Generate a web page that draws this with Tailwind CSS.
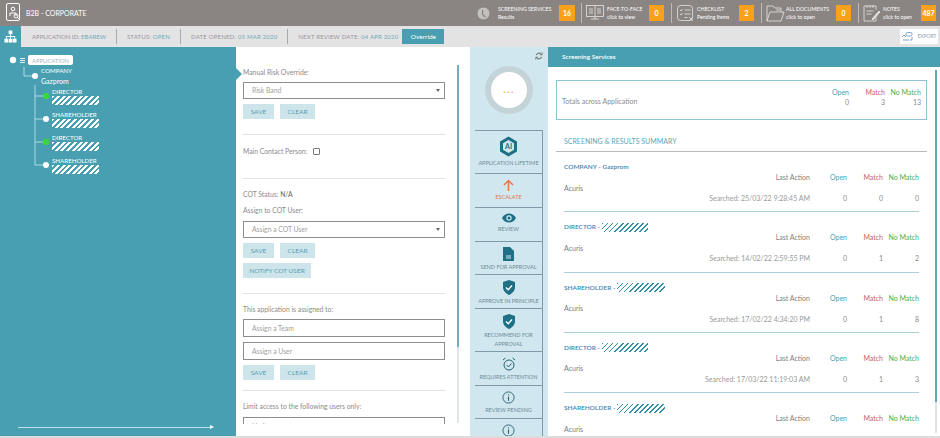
<!DOCTYPE html>
<html lang="en">
<head>
  <meta charset="UTF-8">
  <title>B2B - Corporate</title>
  <script src="https://cdn.jsdelivr.net/npm/@tailwindcss/browser@4"></script>
</head>
<body class="bg-white w-[940px] h-[438px] overflow-hidden font-['Lato',sans-serif] text-[6.8px] text-[#8b8b8b]">

  <!-- Top bar -->
  <header class="h-[26px] bg-[#8a8583] flex items-center text-white">
    <svg class="ml-[6px] w-[16px] h-[20px]" viewBox="0 0 16 20" fill="none" stroke="#fff" stroke-width="1"><rect x="0.5" y="0.5" width="13" height="17" rx="1.5"/><circle cx="7" cy="6" r="1.8"/><path d="M4 13v-3h6v3M11 14l3 3"/><circle cx="10" cy="13" r="2"/></svg>
    <span class="ml-[4px] text-[7px]">B2B - CORPORATE</span>

    <div class="ml-auto flex items-center h-full">
      <svg class="w-[13px] h-[13px] mr-[8px]" viewBox="0 0 14 14"><circle cx="7" cy="7" r="6.5" fill="#c3c0be"/><path d="M6 3v5l3 3" stroke="#8a8583" fill="none" stroke-width="1.3"/></svg>
      <div class="w-[61px] leading-[8px] text-[5.2px]"><div>SCREENING SERVICES</div><div>Results</div></div>
      <div class="w-[16px] h-[16px] bg-[#f9a11b] flex items-center justify-center text-[7px] font-bold">16</div>
      <div class="w-px h-[20px] bg-[#bdbab8] ml-[6px] mr-[4px]"></div>

      <svg class="w-[18px] h-[16px] mr-[3px]" viewBox="0 0 18 16" fill="none" stroke="#e6e4e3" stroke-width="0.8"><rect x="0.5" y="0.5" width="17" height="11"/><path d="M9 1v10M3 4h4M3 6h4M3 8h4M11 4h4M11 6h4M11 8h4M5 14h8M9 12v2"/></svg>
      <div class="w-[42px] leading-[8px] text-[5.2px]"><div>FACE-TO-FACE</div><div>click to view</div></div>
      <div class="w-[15px] h-[16px] bg-[#f9a11b] flex items-center justify-center text-[7px] font-bold">0</div>
      <div class="w-px h-[20px] bg-[#bdbab8] ml-[7px] mr-[5px]"></div>

      <svg class="w-[18px] h-[17px] mr-[2px]" viewBox="0 0 18 17" fill="none" stroke="#e6e4e3" stroke-width="0.8"><rect x="0.5" y="0.5" width="15" height="15" rx="3"/><path d="M3 5l1 1 1.5-2M3 9l1 1 1.5-2M7.5 5h6M7.5 9h6M7.5 12.5h3M12 12l4 4M16 12l-4 4"/></svg>
      <div class="w-[42px] leading-[8px] text-[5.2px]"><div>CHECKLIST</div><div>Pending Items</div></div>
      <div class="w-[15px] h-[16px] bg-[#f9a11b] flex items-center justify-center text-[7px] font-bold">2</div>
      <div class="w-px h-[20px] bg-[#bdbab8] ml-[7px] mr-[4px]"></div>

      <svg class="w-[19px] h-[17px] mr-[1px]" viewBox="0 0 19 17" fill="none" stroke="#e6e4e3" stroke-width="0.8"><path d="M1 16V1h6l2 2h6v4M1 16l3-9h14l-3 9z"/><path d="M10 5h4"/></svg>
      <div class="w-[50px] leading-[8px] text-[5.2px]"><div>ALL DOCUMENTS</div><div>click to open</div></div>
      <div class="w-[15px] h-[16px] bg-[#f9a11b] flex items-center justify-center text-[7px] font-bold">0</div>
      <div class="w-px h-[20px] bg-[#bdbab8] ml-[7px] mr-[4px]"></div>

      <svg class="w-[18px] h-[17px] mr-[2px]" viewBox="0 0 18 17" fill="none" stroke="#e6e4e3" stroke-width="0.8"><path d="M13 11v5H1V1h12v4M4 0v3M7 0v3M10 0v3M3.5 6h7M3.5 9h5"/><path d="M9 14l7-8 1 1-7 8z" fill="#e6e4e3"/></svg>
      <div class="w-[38px] leading-[8px] text-[5.2px]"><div>NOTES</div><div>click to open</div></div>
      <div class="w-[15px] h-[16px] bg-[#f9a11b] flex items-center justify-center text-[7px] font-bold">487</div>
      <div class="w-[4px]"></div>
    </div>
  </header>

  <!-- Application info bar -->
  <div class="h-[21px] bg-[#e4e3e4] flex items-center text-[6px] text-[#9a93a0]">
    <div class="w-[21px] h-full bg-[#479fb1] flex items-center justify-center">
      <svg class="w-[13px] h-[13px]" viewBox="0 0 14 14" fill="#fff"><rect x="5" y="0.5" width="4" height="4"/><rect x="0.5" y="9.5" width="4" height="4"/><rect x="5" y="9.5" width="4" height="4"/><rect x="9.5" y="9.5" width="4" height="4"/><path d="M6.5 4h1v2.5H12V10h-1V7.5H7.500V10h-1V7.500H3V10H2V6.500h4.500z"/></svg>
    </div>
    <span class="ml-[11px]">APPLICATION ID: <span class="text-[#6fa9b8]">EBAREW</span></span>
    <div class="w-px h-[15px] bg-[#a9a9a9] mx-[10px]"></div>
    <span class="tracking-[0.2px]">STATUS: <span class="text-[#5fb0c0]">OPEN</span></span>
    <div class="w-px h-[15px] bg-[#a9a9a9] mx-[10px]"></div>
    <span class="tracking-[0.2px]">DATE OPENED: <span class="text-[#6fa9b8]">05 MAR 2020</span></span>
    <div class="w-px h-[15px] bg-[#a9a9a9] mx-[10px]"></div>
    <span class="tracking-[0.2px]">NEXT REVIEW DATE: <span class="text-[#6fa9b8]">04 APR 2020</span></span>
    <div class="ml-[4px] w-[42px] h-[15px] bg-[#479fb1] text-white text-[6.5px] flex items-center justify-center">Override</div>
    <div class="ml-auto mr-[2px] w-[38px] h-[15px] bg-white flex items-center justify-center gap-[3px] text-[5px] text-[#8fa3b5]">
      <svg class="w-[13px] h-[9px]" viewBox="0 0 13 9" fill="none" stroke="#6e9bc4" stroke-width="0.9"><rect x="5" y="0.5" width="6" height="3.500" rx="1.500"/><path d="M2 8h6M1 5l2-2 2 2M11 5v3h-2"/></svg>
      EXPORT
    </div>
  </div>

  <main class="flex h-[389px]">
    <!-- Tree panel -->
    <section class="relative w-[236px] bg-[#479fb1] text-white text-[7px] leading-[11px] pt-[8px]">
      <svg class="absolute left-0 top-0 w-[100px] h-[130px]" viewBox="0 0 100 130" fill="none" stroke="#cfe6ee" stroke-width="0.8">
        <path d="M24 20v9h9M35 38v80M35 49h9M35 72h9M35 95h9M35 118h9"/>
        <g stroke="none">
          <circle cx="13" cy="13" r="3.200" fill="#fff"/>
          <path d="M20 11h5v1h-5zM20 13h5v1h-5zM20 15h5v1h-5z" fill="#e4f0f3"/>
          <circle cx="35" cy="29" r="3" fill="#fff"/>
          <circle cx="46" cy="49" r="3.200" fill="#3fd43f"/>
          <circle cx="46" cy="72" r="3" fill="#fff"/>
          <circle cx="46" cy="95" r="3.200" fill="#3fd43f"/>
          <circle cx="46" cy="118" r="3" fill="#fff"/>
        </g>
      </svg>
      <div class="ml-[28px] w-[45px] h-[10px] bg-white rounded-[2px] text-[#a7b9bf] flex items-center justify-center text-[5.8px]">APPLICATION</div>
      <div class="ml-[41px] leading-[11px]"><span class="text-[6.2px]">COMPANY</span><br>Gazprom</div>
      <div id="treeNodes" class="ml-[52px]"></div>
      <div class="absolute left-[18px] bottom-[8px] w-[194px] h-px bg-[#bfe0e8]">
        <div class="absolute right-[-2px] top-[-2px] w-0 h-0 border-y-[2.500px] border-y-transparent border-l-[4px] border-l-white"></div>
      </div>
      <div class="absolute left-[236px] top-[21px] z-10 w-0 h-0 border-y-[6px] border-y-transparent border-l-[6px] border-l-[#479fb1]"></div>
    </section>

    <!-- Form panel -->
    <section class="relative w-[234px] overflow-hidden px-[7px] pt-[20px] text-[#8b8b8b]">
      <div class="w-[202px]">
        <p class="leading-[10px]">Manual Risk Override:</p>
        <div class="mt-[5px] h-[17px] border border-[#8d8d8d] flex items-center justify-between pl-[8px] pr-[4px] text-[#a0a0a0]"><span>Risk Band</span><span class="w-0 h-0 border-x-[2px] border-x-transparent border-t-[3px] border-t-[#666]"></span></div>
        <div class="mt-[5px] flex gap-[6px]">
          <button class="w-[31px] h-[15px] bg-[#cde4eb] text-[#5b9db0] text-[6.500px]">SAVE</button>
          <button class="w-[35px] h-[15px] bg-[#cde4eb] text-[#5b9db0] text-[6.500px]">CLEAR</button>
        </div>
        <div class="mt-[15px] h-px bg-[#e2e2e2]"></div>

        <div class="mt-[10px] h-[12px] flex items-center gap-[6px]">
          <span>Main Contact Person:</span>
          <span class="w-[7px] h-[7px] border border-[#777] rounded-[1px]"></span>
        </div>
        <div class="mt-[21px] h-px bg-[#e2e2e2]"></div>

        <p class="mt-[10px] leading-[10px]">COT Status: <span class="text-[#666]">N/A</span></p>
        <p class="mt-[6px] leading-[10px]">Assign to COT User:</p>
        <div class="mt-[6px] h-[17px] border border-[#8d8d8d] flex items-center justify-between pl-[8px] pr-[4px] text-[#a0a0a0]"><span>Assign a COT User</span><span class="w-0 h-0 border-x-[2px] border-x-transparent border-t-[3px] border-t-[#666]"></span></div>
        <div class="mt-[5px] flex gap-[6px]">
          <button class="w-[31px] h-[15px] bg-[#cde4eb] text-[#5b9db0] text-[6.500px]">SAVE</button>
          <button class="w-[35px] h-[15px] bg-[#cde4eb] text-[#5b9db0] text-[6.500px]">CLEAR</button>
        </div>
        <button class="mt-[5px] block w-[68px] h-[15px] bg-[#cde4eb] text-[#5b9db0] text-[6.500px]">NOTIFY COT USER</button>
        <div class="mt-[15px] h-px bg-[#e2e2e2]"></div>

        <p class="mt-[10px] leading-[10px]">This application is assigned to:</p>
        <div class="mt-[5px] h-[18px] border border-[#8d8d8d] flex items-center pl-[8px] text-[#a0a0a0]">Assign a Team</div>
        <div class="mt-[5px] h-[18px] border border-[#8d8d8d] flex items-center pl-[8px] text-[#a0a0a0]">Assign a User</div>
        <div class="mt-[5px] flex gap-[6px]">
          <button class="w-[31px] h-[15px] bg-[#cde4eb] text-[#5b9db0] text-[6.500px]">SAVE</button>
          <button class="w-[35px] h-[15px] bg-[#cde4eb] text-[#5b9db0] text-[6.500px]">CLEAR</button>
        </div>
        <div class="mt-[10px] h-px bg-[#e2e2e2]"></div>

        <p class="mt-[10px] leading-[10px]">Limit access to the following users only:</p>
        <div class="mt-[6px] h-[18px] border border-[#8d8d8d] flex items-center pl-[8px] text-[#a0a0a0]">Limit access to users</div>
      </div>
      <div class="absolute left-[221px] top-[18px] w-[2px] h-[358px] bg-[#dfe6e8]">
        <div class="w-[2px] h-[282px] bg-[#6fb0c0]"></div>
      </div>
      <div class="absolute left-0 right-0 bottom-0 h-[12px] bg-white"></div>
    </section>

    <!-- Action column -->
    <section class="relative w-[78px] bg-[#d0e7ef] px-[5px] overflow-hidden">
      <svg class="absolute left-[65px] top-[5px] w-[8px] h-[8px]" viewBox="0 0 10 10" fill="none" stroke="#555" stroke-width="1.200"><path d="M8.500 3A4 4 0 0 0 1.500 4M1.500 7A4 4 0 0 0 8.500 6"/><path d="M9 0.500v3H6M1 9.500v-3h3" stroke-width="0.8"/></svg>
      <div class="mt-[19px] mx-auto w-[48px] h-[48px] rounded-full bg-[#c4d3d7] flex items-center justify-center">
        <div class="w-[36px] h-[36px] rounded-full bg-white flex items-center justify-center text-[#f2a94a] text-[10px] font-bold tracking-[1.500px] leading-none pb-[3px]">...</div>
      </div>
      <div id="actions" class="mt-[16px] border-t border-[#7f9aa8]"></div>
    </section>

    <!-- Screening services panel -->
    <section class="relative flex-1 overflow-hidden">
      <div class="h-[20px] bg-[#479fb1] text-white text-[6.500px] flex items-center pl-[14px] font-semibold">Screening Services</div>
      <div class="mx-[8px] mt-[13px] w-[371px] h-[40px] border border-[#8fc3d0] flex items-center pl-[5px] pt-[3px] text-[7px] relative">
        <span>Totals across Application</span>
        <div class="absolute right-[5px] top-[6px] grid grid-cols-[44px_36px_36px] text-right leading-[10px] whitespace-nowrap">
          <span class="text-[#479fb1]">Open</span><span class="text-[#c8605f]">Match</span><span class="text-[#4caf50]">No Match</span>
          <span>0</span><span>3</span><span>13</span>
        </div>
      </div>
      <div class="mx-[8px] w-[371px] mt-[15px] pl-[8px] pb-[4px] border-b border-[#b9b9b9] text-[#5fa5b6] text-[7px] leading-[12px]">SCREENING &amp; RESULTS SUMMARY</div>
      <div id="rows" class="ml-[16px] w-[355px]"></div>
      <div class="absolute left-[387px] top-[23px] w-[2px] h-[363px] bg-[#dfe3e5]">
        <div class="w-[2px] h-[332px] bg-[#5fa8b8]"></div>
      </div>
    </section>
  </main>
  <div class="h-[2px] bg-[#dcdcdc]"></div>

  <script>
    // Tree children
    const treeNodes = ["DIRECTOR", "SHAREHOLDER", "DIRECTOR", "SHAREHOLDER"];
    document.getElementById("treeNodes").innerHTML = treeNodes.map(name => `
      <div class="h-[23px]">
        <div class="leading-[9px] text-[6.200px]">${name}</div>
        <div class="w-[47px] h-[9px] bg-[repeating-linear-gradient(135deg,#fff_0_2px,transparent_2px_4px)]"></div>
      </div>`).join("");

    // Action buttons
    const shield = `<svg class="w-[14px] h-[15px]" viewBox="0 0 14 15"><path d="M7 0l6 2v5c0 4-3 6.500-6 8-3-1.500-6-4-6-8V2z" fill="#1f6f85"/><path d="M4 7.500l2.200 2.200L10 5.500" stroke="#fff" stroke-width="1.400" fill="none"/></svg>`;
    const info = `<svg class="w-[13px] h-[13px]" viewBox="0 0 14 14" fill="none" stroke="#2a6070"><circle cx="7" cy="7" r="6"/><path d="M7 6v4.500M7 3.500v1.200" stroke-width="1.200"/></svg>`;
    const actions = [
      { h: 43, label: "APPLICATION LIFETIME", icon: `<svg class="w-[19px] h-[21px]" viewBox="0 0 19 21"><path d="M9.500 0.500l8.500 5v10l-8.500 5-8.500-5v-10z" fill="#1f6f85"/><path d="M9.500 4l5.500 3.200v6.600L9.500 17 4 13.800V7.200z" fill="#d0e7ef"/><text x="9.500" y="13" text-anchor="middle" font-size="7" font-weight="700" fill="#1f6f85" font-family="Lato">AI</text></svg>` },
      { h: 34, label: "ESCALATE", color: "text-[#e8744a]", icon: `<svg class="w-[11px] h-[12px]" viewBox="0 0 11 12" fill="none" stroke="#e8744a" stroke-width="1.500"><path d="M5.500 12V1.500M1 6l4.500-4.500L10 6"/></svg>` },
      { h: 34, label: "REVIEW", icon: `<svg class="w-[14px] h-[10px]" viewBox="0 0 14 10"><path d="M0 5c3-6 11-6 14 0-3 6-11 6-14 0z" fill="#1f6f85"/><circle cx="7" cy="5" r="2.700" fill="#d0e7ef"/><circle cx="7" cy="5" r="1.500" fill="#1f6f85"/></svg>` },
      { h: 33, label: "SEND FOR APPROVAL", icon: `<svg class="w-[11px] h-[14px]" viewBox="0 0 11 14"><path d="M0 0h7l4 4v10H0z" fill="#1f6f85"/><path d="M3 9h5M3 11h5" stroke="#d0e7ef"/></svg>` },
      { h: 34, label: "APPROVE IN PRINCIPLE", icon: shield },
      { h: 43, label: "RECOMMEND FOR<br>APPROVAL", icon: shield },
      { h: 34, label: "REQUIRES ATTENTION", icon: `<svg class="w-[14px] h-[14px]" viewBox="0 0 14 14" fill="none" stroke="#2a6070"><circle cx="7" cy="8" r="5"/><path d="M4.500 8l2 2 3-3.500M1 3l2.500-2M13 3l-2.500-2"/></svg>` },
      { h: 33, label: "REVIEW PENDING", icon: info },
      { h: 34, label: "", icon: info },
    ];
    document.getElementById("actions").innerHTML = actions.map(a => `
      <div class="flex flex-col items-center pt-[5px] border-b border-r border-[#7f9aa8] text-[5.500px] leading-[9px] text-center ${a.color || "text-[#6f8b96]"}" style="height:${a.h}px">
        ${a.icon}
        <span class="mt-[2px]">${a.label}</span>
      </div>`).join("");

    // Screening rows
    const rows = [
      { type: "COMPANY", name: "Gazprom", searched: "25/03/22 9:28:45 AM", vals: [0, 0, 0] },
      { type: "DIRECTOR", w: 46, searched: "14/02/22 2:59:55 PM", vals: [0, 1, 2] },
      { type: "SHAREHOLDER", w: 48, searched: "17/02/22 4:34:20 PM", vals: [0, 1, 8] },
      { type: "DIRECTOR", w: 46, searched: "17/03/22 11:19:03 AM", vals: [0, 1, 3] },
      { type: "SHAREHOLDER", w: 48, searched: "", vals: [0, 0, 0] },
    ];
    document.getElementById("rows").innerHTML = rows.map(r => `
      <div class="h-[60.300px] pt-[10px] border-b border-[#a9cfd9]">
        <div class="flex items-center gap-[2px] h-[10px] text-[#3f7fb0] font-semibold text-[6.500px]">
          <span>${r.type} -</span>
          ${r.name ? `<span>${r.name}</span>` : `<span class="h-[9px] bg-[repeating-linear-gradient(135deg,#2f8ea3_0_1.200px,transparent_1.200px_3.600px)]" style="width:${r.w}px"></span>`}
        </div>
        <div class="grid grid-cols-[246px_37px_36px_36px] text-[7px] leading-[10.500px] text-right whitespace-nowrap">
          <span class="text-[#808080]">Last Action</span>
          <span class="text-[#479fb1]">Open</span>
          <span class="text-[#c8605f]">Match</span>
          <span class="text-[#4caf50]">No Match</span>
          <span class="col-span-4 text-left text-[#808080]">Acuris</span>
          ${r.searched ? `<span class="text-[#9a9a9a]">Searched: ${r.searched}</span>
          <span>${r.vals[0]}</span>
          <span>${r.vals[1]}</span>
          <span>${r.vals[2]}</span>` : ""}
        </div>
      </div>`).join("");
  </script>
</body>
</html>
